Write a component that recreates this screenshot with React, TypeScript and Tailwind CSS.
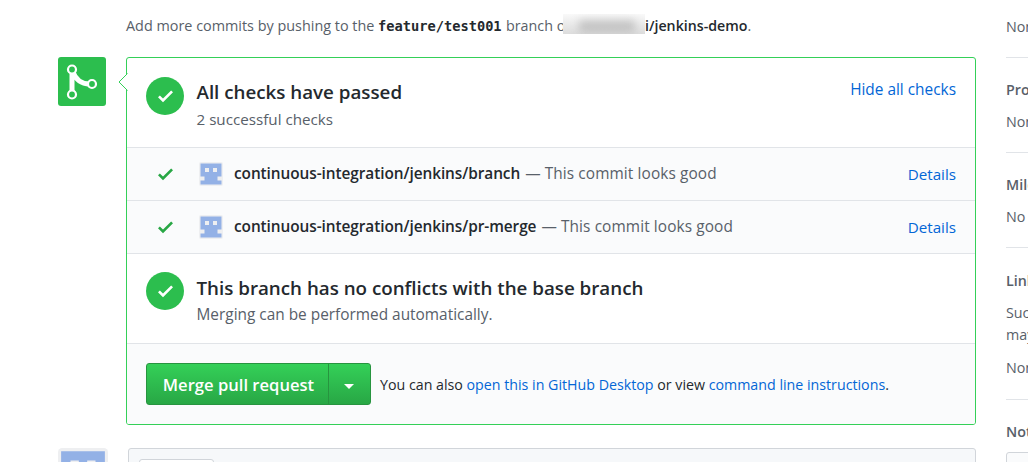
import React from "react";

function CheckMark({ className }: { className: string }) {
  return (
    <svg viewBox="0 0 12 16" className={className} fill="currentColor">
      <path d="M12 5l-8 8-4-4 1.500-1.500L4 10l6.500-6.500L12 5z" />
    </svg>
  );
}

function Identicon({ className }: { className: string }) {
  return (
    <svg viewBox="0 0 24 24" className={className}>
      <rect width="24" height="24" rx="2" fill="#eeeff1" />
      <path
        fill="#93b1e6"
        fillRule="evenodd"
        d="M1.500 1.500h21v13h-4v4h4v4h-21v-4h4v-4h-4zM6 6v4h4v-4zM14 6v4h4v-4z"
      />
    </svg>
  );
}

function StatusCircle() {
  return (
    <div className="flex size-[38px] shrink-0 items-center justify-center rounded-full bg-[#2cbe4e] text-white">
      <CheckMark className="h-5 w-[15px]" />
    </div>
  );
}

function CheckRow({ name }: { name: string }) {
  return (
    <div className="flex h-[53px] items-center border-t border-[#e1e4e8] bg-[#fafbfc] pr-[19px] pl-[31px]">
      <CheckMark className="h-5 w-[15px] text-[#28a745]" />
      <Identicon className="ml-[26px] size-6" />
      <span className="ml-[11px] text-[15.4px] font-semibold tracking-[-0.07px] text-[#24292e]">{name}</span>
      <span className="ml-[5px] tracking-[0.1px] text-[#586069]">— This commit looks good</span>
      <a className="mb-px ml-auto text-[15.2px] text-[#0366d6]">Details</a>
    </div>
  );
}

function SideSection({ title, body }: { title: string; body: string }) {
  return (
    <section className="h-[95px] border-t border-[#e1e4e8]">
      <h3 className="mt-[20px] h-6 leading-6 font-semibold">{title}</h3>
      <p className="mt-2 h-6 leading-6">{body}</p>
    </section>
  );
}

export default function App() {
  return (
    <div className="flex h-[462px] w-[1028px] overflow-hidden bg-white font-['Open_Sans','Noto_Sans',sans-serif] text-[15.4px] leading-[22px] whitespace-nowrap text-[#24292e]">
      <div className="flex w-[126px] shrink-0 flex-col pt-[57px] pl-[58px]">
        <div className="h-[49px] w-12 shrink-0 rounded-[3px] bg-[#2cbe4e]">
          <svg viewBox="0 0 48 49" className="h-[49px] w-12" fill="none" stroke="white">
            <path strokeWidth="5" d="M14 15v20M14.500 14c2.500 7 8 13 17 13" />
            <g strokeWidth="2.200" fill="#2cbe4e">
              <circle cx="14" cy="12.500" r="4" />
              <circle cx="14" cy="37.500" r="4" />
              <circle cx="34" cy="27" r="4" />
            </g>
          </svg>
        </div>
        <Identicon className="mt-[342px] size-[50px] shrink-0" />
      </div>

      <main className="flex w-[850px] shrink-0 flex-col">
        <p className="flex h-[57px] shrink-0 items-center pb-[5px] text-[14.3px] text-[#586069]">
          <span className="w-[252px] text-[14.400px]">Add more commits by pushing to the</span>
          <span className="w-[128px] font-['DejaVu_Sans_Mono',monospace] text-[13.7px] font-bold text-[#24292e]">feature/test001</span>
          <span className="w-[57px]">branch o</span>
          <span className="mb-1 flex h-5 w-[82px] items-center overflow-hidden bg-gradient-to-b from-[#f9f9f9] to-[#dcdcdc]">
            <span className="mt-1 ml-4 h-3 w-14 bg-[#8d8d8d] opacity-40 blur-[4px]" />
          </span>
          <span className="text-[14.2px] font-semibold text-[#24292e]">i/jenkins-demo</span>
          <span>.</span>
        </p>

        <div className="relative h-[368px] shrink-0 rounded-[3px] border border-[#34d058]">
          <svg viewBox="0 0 10 18" className="absolute top-[15px] left-[-9px] h-[18px] w-[10px]">
            <path d="M9.500 .5L1 9l8.500 8.500" fill="white" stroke="#34d058" />
          </svg>
          <div className="flex h-[89px] items-start pt-[19px] pr-[19px] pl-[19px]">
            <StatusCircle />
            <div className="ml-[12.500px]">
              <h2 className="mt-[2px] h-[26px] text-[18.75px] leading-[26px] font-semibold">All checks have passed</h2>
              <p className="mt-[3px] text-[15.2px] leading-[22px] text-[#586069]">2 successful checks</p>
            </div>
            <a className="mt-[2px] ml-auto text-[#0366d6]">Hide all checks</a>
          </div>
          <CheckRow name="continuous-integration/jenkins/branch" />
          <CheckRow name="continuous-integration/jenkins/pr-merge" />
          <div className="flex h-[90px] items-start border-t border-[#e1e4e8] pt-[18px] pl-[19px]">
            <StatusCircle />
            <div className="ml-[12.500px]">
              <h2 className="mt-[3px] h-[26px] text-[18.75px] leading-[26px] font-semibold">This branch has no conflicts with the base branch</h2>
              <p className="mt-[3px] leading-[22px] text-[#586069]">Merging can be performed automatically.</p>
            </div>
          </div>
          <div className="flex h-[81px] items-center rounded-b-[2px] border-t border-[#e1e4e8] bg-[#fafbfc] pl-[19px]">
            <div className="flex h-[42px] w-[225px] overflow-hidden rounded-[3px] border border-[#27943f] bg-gradient-to-b from-[#34d058] to-[#28a745] text-white">
              <button className="flex w-[182px] items-center justify-center border-r border-[#27943f] pt-px pl-0.5 text-[16.6px] font-semibold">Merge pull request</button>
              <button className="flex flex-1 items-center justify-center pt-1 pr-0.5">
                <svg viewBox="0 0 10 5" className="h-[5px] w-[10px]" fill="white"><path d="M0 0h10L5 5z" /></svg>
              </button>
            </div>
            <p className="mt-[2px] ml-[9px] text-[14.22px]">
              You can also <a className="text-[#0366d6]">open this in GitHub Desktop</a> or view <a className="text-[#0366d6]">command line instructions</a>.
            </p>
          </div>
        </div>

        <div className="mt-[23px] ml-[2px] h-10 shrink-0 rounded-[3px] border border-[#d1d5da] bg-[#f6f8fa] pt-[10px] pl-[10px]">
          <div className="h-10 w-[75px] rounded-[3px] border border-[#d1d5da] bg-white" />
        </div>
      </main>

      <aside className="ml-[30px] w-[240px] shrink-0 text-[14.3px] text-[#586069]">
        <p className="h-[57px] pt-[15px] leading-6">None yet</p>
        <SideSection title="Projects" body="None yet" />
        <SideSection title="Milestone" body="No milestone" />
        <section className="h-[152px] border-t border-[#e1e4e8]">
          <h3 className="mt-[21px] h-6 leading-6 font-semibold">Linked issues</h3>
          <p className="mt-[9px] leading-[22px]">Successfully merging this pull request<br />may close these issues.</p>
          <p className="mt-[11px] leading-[22px]">None yet</p>
        </section>
        <section className="border-t border-[#e1e4e8]">
          <h3 className="mt-[20px] h-6 leading-6 font-semibold">Notifications</h3>
          <div className="mt-[8px] h-10 rounded-[3px] border border-[#d1d5da] bg-[#fafbfc]" />
        </section>
      </aside>
    </div>
  );
}
